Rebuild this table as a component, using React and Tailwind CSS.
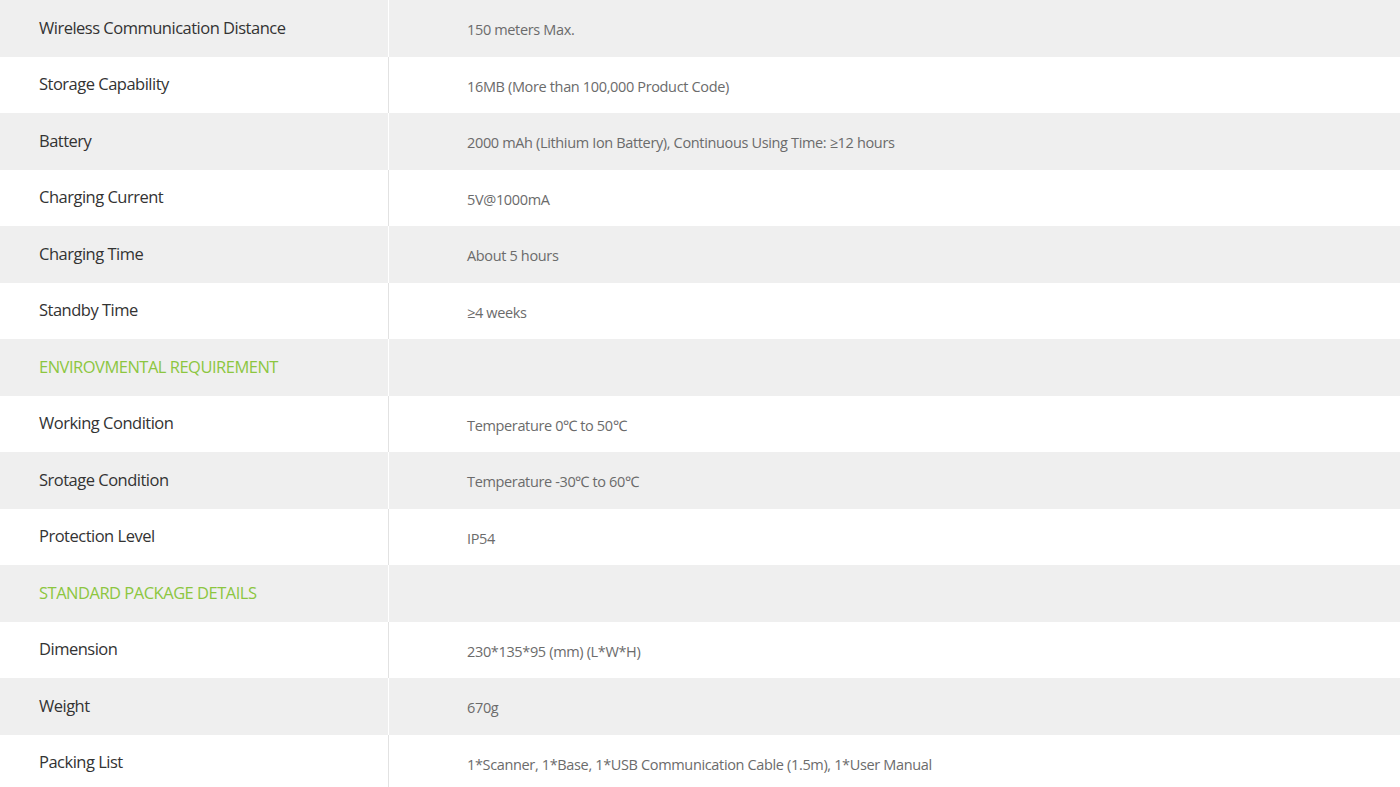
import React from 'react';

const rows = [
  { label: 'Wireless Communication Distance', value: '150 meters Max.' },
  { label: 'Storage Capability', value: '16MB (More than 100,000 Product Code)' },
  { label: 'Battery', value: '2000 mAh (Lithium Ion Battery), Continuous Using Time: ≥12 hours' },
  { label: 'Charging Current', value: '5V@1000mA' },
  { label: 'Charging Time', value: 'About 5 hours' },
  { label: 'Standby Time', value: '≥4 weeks' },
  { label: 'ENVIROVMENTAL REQUIREMENT', section: true },
  { label: 'Working Condition', value: 'Temperature 0℃ to 50℃' },
  { label: 'Srotage Condition', value: 'Temperature -30℃ to 60℃' },
  { label: 'Protection Level', value: 'IP54' },
  { label: 'STANDARD PACKAGE DETAILS', section: true },
  { label: 'Dimension', value: '230*135*95 (mm) (L*W*H)' },
  { label: 'Weight', value: '670g' },
  { label: 'Packing List', value: '1*Scanner, 1*Base, 1*USB Communication Cable (1.5m), 1*User Manual' },
];

export default function App() {
  return (
    <div className="w-[1400px] h-[787px] overflow-hidden bg-white font-['Open_Sans',sans-serif]">
      {rows.map((row, i) => {
        const gray = i % 2 === 0;
        return (
          <div key={i} className={`flex h-[56.5px] ${gray ? 'bg-[#efefef]' : 'bg-white'}`}>
            <div
              className={`w-[388px] flex items-center pl-[39px] text-[16.5px] tracking-[-0.5px] ${
                row.section ? 'text-[#8cc63f]' : 'text-[#333]'
              }`}
            >
              {row.label}
            </div>
            <div
              className={`flex-1 flex items-center pl-[78px] pt-1 border-l ${
                gray ? 'border-white' : 'border-[#e2e2e2]'
              } text-[14.5px] tracking-[-0.35px] text-[#6b6b6b]`}
            >
              {row.value}
            </div>
          </div>
        );
      })}
    </div>
  );
}
